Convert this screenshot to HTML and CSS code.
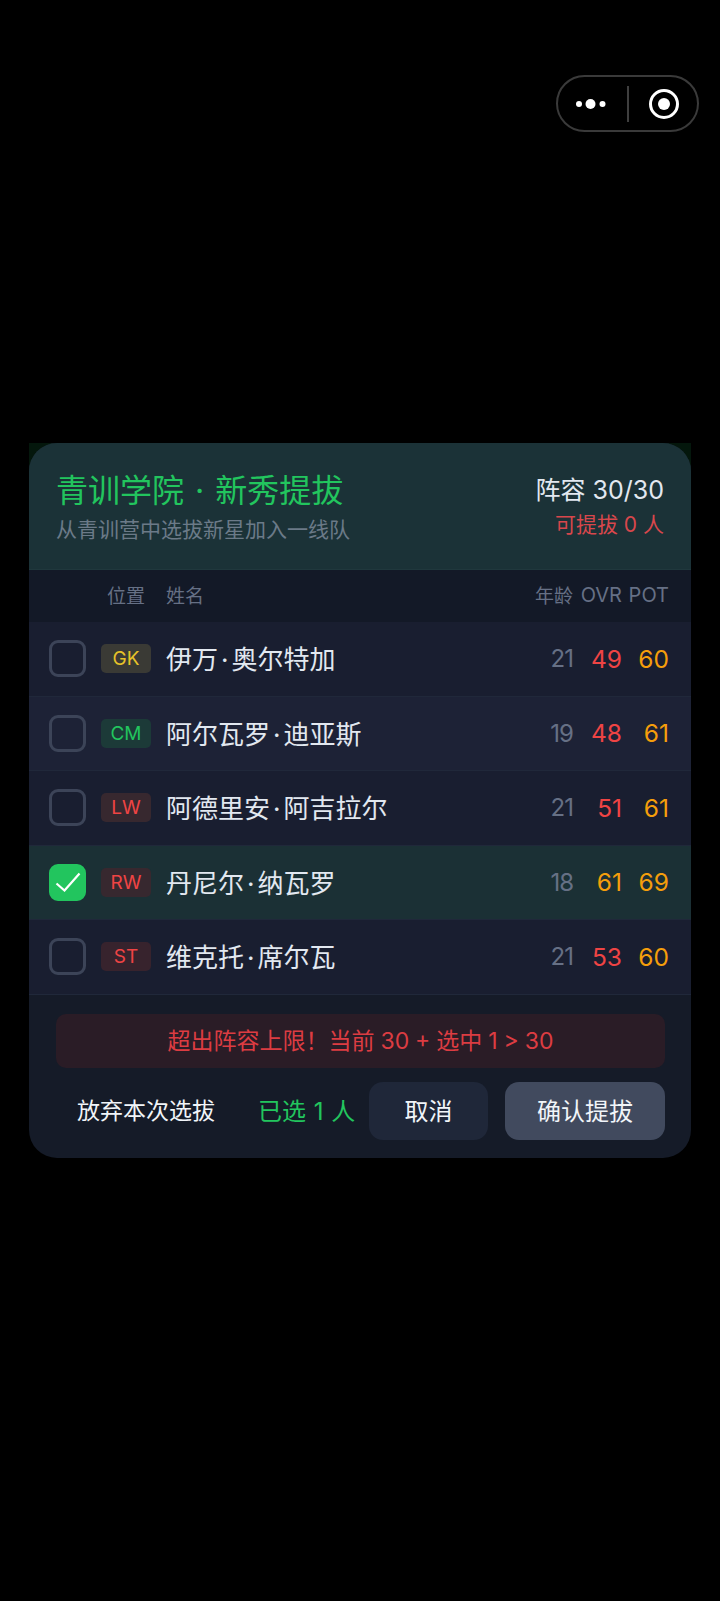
FILE: index.html
```html
<!DOCTYPE html>
<html lang="zh-CN">
<head>
  <meta charset="UTF-8" />
  <meta name="viewport" content="width=device-width, initial-scale=1.0" />
  <title>青训学院</title>
  <link rel="stylesheet" href="styles.css">
</head>
<body>
  <div class="capsule">
    <svg class="capsule-more" width="30" height="12" viewBox="0 0 30 12"><circle cx="3" cy="6" r="3" fill="#fff"/><circle cx="14.5" cy="6" r="5" fill="#fff"/><circle cx="26.5" cy="6" r="3" fill="#fff"/></svg>
    <div class="capsule-line"></div>
    <svg class="capsule-close" width="30" height="30" viewBox="0 0 30 30"><circle cx="15" cy="15" r="13.5" fill="none" stroke="#fff" stroke-width="3"/><circle cx="15" cy="15" r="6" fill="#fff"/></svg>
  </div>

  <div class="sheet">
    <div class="modal">
      <div class="modal-head">
        <div>
          <h1 class="title">青训学院<span class="title-dot">·</span>新秀提拔</h1>
          <p class="subtitle">从青训营中选拔新星加入一线队</p>
        </div>
        <div class="head-right">
          <div class="roster">阵容 30/30</div>
          <div class="can-promote">可提拔 0 人</div>
        </div>
      </div>

      <div class="col-head">
        <span class="col-pos">位置</span>
        <span class="col-name">姓名</span>
        <span class="col-age">年龄</span>
        <span class="col-ovr">OVR</span>
        <span class="col-pot">POT</span>
      </div>

      <div class="row">
        <span class="check"></span>
        <span class="pos pos-gk">GK</span>
        <span class="name">伊万<span class="dot">·</span>奥尔特加</span>
        <span class="age">21</span>
        <span class="ovr red">49</span>
        <span class="pot">60</span>
      </div>
      <div class="row row-alt">
        <span class="check"></span>
        <span class="pos pos-cm">CM</span>
        <span class="name">阿尔瓦罗<span class="dot">·</span>迪亚斯</span>
        <span class="age">19</span>
        <span class="ovr red">48</span>
        <span class="pot">61</span>
      </div>
      <div class="row">
        <span class="check"></span>
        <span class="pos pos-fw">LW</span>
        <span class="name">阿德里安<span class="dot">·</span>阿吉拉尔</span>
        <span class="age">21</span>
        <span class="ovr red">51</span>
        <span class="pot">61</span>
      </div>
      <div class="row row-on">
        <span class="check check-on">
          <svg width="26" height="20" viewBox="0 0 26 20"><path d="M1.5 11.5 L9.5 18.5 L24.5 1.5" fill="none" stroke="#fff" stroke-width="2.2"/></svg>
        </span>
        <span class="pos pos-fw">RW</span>
        <span class="name">丹尼尔<span class="dot">·</span>纳瓦罗</span>
        <span class="age">18</span>
        <span class="ovr orange">61</span>
        <span class="pot">69</span>
      </div>
      <div class="row">
        <span class="check"></span>
        <span class="pos pos-st">ST</span>
        <span class="name">维克托<span class="dot">·</span>席尔瓦</span>
        <span class="age">21</span>
        <span class="ovr red">53</span>
        <span class="pot">60</span>
      </div>

      <div class="modal-foot">
        <div class="alert">超出阵容上限！当前 30 + 选中 1 &gt; 30</div>
        <div class="actions">
          <button class="btn-text">放弃本次选拔</button>
          <span class="picked">已选 1 人</span>
          <button class="btn btn-cancel">取消</button>
          <button class="btn btn-ok">确认提拔</button>
        </div>
      </div>
    </div>
  </div>
</body>
</html>
```

FILE: styles.css
```css
* {
  box-sizing: border-box;
}
html, body {
  margin: 0;
  height: 1601px;
  background: #000;
  overflow: hidden;
}
body {
  position: relative;
  font-family: Inter, "Noto Sans CJK SC", sans-serif;
  color: #f1f5f9;
  padding: 443px 29px 0;
}
.capsule {
  position: absolute;
  top: 75px;
  left: 556px;
  width: 143px;
  height: 57px;
  padding-left: 18px;
  border: 2px solid #3a3a3a;
  border-radius: 29px;
  display: flex;
  align-items: center;
}
.capsule-line {
  width: 2px;
  height: 36px;
  margin-left: 21px;
  background: #3f3f3f;
}
.capsule-close {
  margin-left: 20px;
}
/* corners of the sheet show a faint green behind the rounded modal */
.sheet {
  width: 662px;
  background: linear-gradient(#04170c 0, #04170c 28px, transparent 28px);
}
.modal {
  height: 715px;
  background: #151b28;
  border-radius: 28px;
  overflow: hidden;
}
.modal-head {
  height: 127px;
  padding: 27px 27px 0 27px;
  background: #1b3237;
  border-bottom: 1px solid #20383d;
  display: flex;
  justify-content: space-between;
}
.title {
  margin: 0;
  font-size: 32px;
  font-weight: 400;
  line-height: 42px;
  color: #22c55e;
}
.title-dot {
  margin: 0 11px;
}
.subtitle {
  margin: 4px 0 0;
  font-size: 21px;
  line-height: 28px;
  color: #6b7a88;
}
.head-right {
  text-align: right;
  padding-top: 3px;
}
.roster {
  font-size: 25px;
  line-height: 34px;
  color: #e2e8f0;
}
.can-promote {
  margin-top: 3px;
  font-size: 21px;
  line-height: 30px;
  color: #d8474c;
}
.col-head {
  height: 52px;
  padding: 0 22px 3px 0;
  background: #131927;
  display: flex;
  align-items: center;
  font-size: 20px;
  color: #667085;
}
.col-pos {
  margin-left: 78px;
  width: 59px;
  font-size: 19px;
}
.col-name {
  flex: 1;
  font-size: 19px;
}
.col-age {
  width: 42px;
  text-align: right;
  font-size: 19px;
}
.col-ovr {
  width: 49px;
  text-align: right;
}
.col-pot {
  width: 47px;
  text-align: right;
}
.row {
  height: 74.5px;
  padding: 0 22px 0 20px;
  background: #191e30;
  border-bottom: 1px solid #20283a;
  display: flex;
  align-items: center;
}
.row-alt {
  background: #1d2236;
}
.row-on {
  background: #1b3035;
}
.check {
  width: 37px;
  height: 37px;
  border: 3px solid #3c4458;
  border-radius: 9px;
  display: flex;
  align-items: center;
  justify-content: center;
}
.check-on {
  background: #22c55e;
  border-color: #22c55e;
}
.pos {
  width: 50px;
  height: 29px;
  margin-left: 15px;
  border-radius: 5px;
  font-size: 19px;
  line-height: 29px;
  text-align: center;
}
.pos-gk {
  background: #3a3a35;
  color: #e6c229;
}
.pos-cm {
  background: #1c3a38;
  color: #22c55e;
}
.pos-fw {
  background: #37282f;
  color: #ef4444;
}
.pos-st {
  background: #37232d;
  color: #ef4444;
}
.name {
  flex: 1;
  margin-left: 15px;
  padding-bottom: 2px;
  font-size: 26px;
  color: #e2e8f0;
}
.dot {
  margin: 0 3px;
}
.age {
  width: 42px;
  text-align: right;
  font-size: 24px;
  letter-spacing: -1px;
  color: #667085;
}
.ovr, .pot {
  text-align: right;
  font-size: 24.5px;
}
.ovr {
  width: 49px;
}
.pot {
  width: 47px;
  color: #f59e0b;
}
.red {
  color: #ef4444;
}
.orange {
  color: #f59e0b;
}
.modal-foot {
  padding: 19px 26px 0 27px;
}
.alert {
  height: 54px;
  background: #2a1c26;
  border-radius: 10px;
  font-size: 23px;
  line-height: 54px;
  text-align: center;
  word-spacing: -0.5px;
  color: #dc3c42;
}
.actions {
  margin-top: 14px;
  display: flex;
  align-items: center;
}
.btn-text {
  width: 180px;
  padding: 0 0 3px;
  margin-right: 22px;
  background: none;
  border: none;
  font: inherit;
  font-size: 23px;
  color: #f1f5f9;
}
.picked {
  width: 111px;
  padding-bottom: 3px;
  font-size: 24px;
  word-spacing: 1px;
  color: #22c55e;
}
.btn {
  height: 58px;
  padding: 0 0 3px;
  border: none;
  border-radius: 14px;
  font: inherit;
  font-size: 24px;
  color: #f1f5f9;
}
.btn-cancel {
  width: 119px;
  background: #1f2739;
}
.btn-ok {
  width: 160px;
  margin-left: 17px;
  background: #414a5e;
}
```
